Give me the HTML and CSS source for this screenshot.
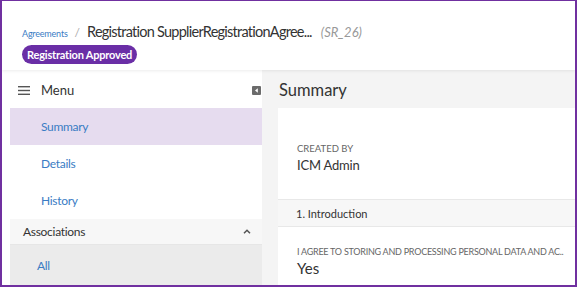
FILE: index.html
```html
<!DOCTYPE html>
<html lang="en">
<head>
    <meta charset="UTF-8">
    <title>Registration Agreement</title>
    <link rel="stylesheet" href="styles.css">
</head>
<body>
    <div class="frame">
        <header class="page-header">
            <div class="crumbs">
                <a class="crumb-link" href="#">Agreements</a>
                <span class="crumb-sep">/</span>
                <h1 class="title">Registration SupplierRegistrationAgree...</h1>
                <span class="code">(SR_26)</span>
            </div>
            <span class="badge">Registration Approved</span>
        </header>

        <div class="layout">
            <aside class="sidebar">
                <div class="menu-head">
                    <svg class="burger" width="12" height="9" viewBox="0 0 12 9">
                        <rect x="0" y="0" width="12" height="1.4" fill="#555"/>
                        <rect x="0" y="3.8" width="12" height="1.4" fill="#555"/>
                        <rect x="0" y="7.6" width="12" height="1.4" fill="#555"/>
                    </svg>
                    <span class="menu-label">Menu</span>
                    <svg class="collapse" width="9" height="9" viewBox="0 0 9 9">
                        <rect width="9" height="9" rx="1" fill="#6b6b6b"/>
                        <path d="M5.8 2.2 L3 4.5 L5.8 6.8 Z" fill="#fff"/>
                    </svg>
                </div>
                <a class="nav-item active" href="#">Summary</a>
                <a class="nav-item" href="#">Details</a>
                <a class="nav-item" href="#">History</a>
                <div class="group-head">
                    <span>Associations</span>
                    <svg width="8" height="5" viewBox="0 0 8 5">
                        <path d="M1 4.2 L4 1.2 L7 4.2" fill="none" stroke="#555" stroke-width="1.5"/>
                    </svg>
                </div>
                <a class="nav-item sub" href="#">All</a>
            </aside>

            <main class="main">
                <h2 class="main-title">Summary</h2>
                <div class="card">
                    <div class="field first">
                        <div class="field-label">CREATED BY</div>
                        <div class="field-value">ICM Admin</div>
                    </div>
                    <div class="section-head">1. Introduction</div>
                    <div class="field">
                        <div class="field-label narrow">I AGREE TO STORING AND PROCESSING PERSONAL DATA AND AC..</div>
                        <div class="field-value big">Yes</div>
                    </div>
                </div>
            </main>
        </div>
    </div>
</body>
</html>
```

FILE: styles.css
```css
* {
    margin: 0;
    padding: 0;
    box-sizing: border-box;
}

body {
    font-family: Lato, "Open Sans", sans-serif;
    color: #333;
    background: #fff;
}

a {
    text-decoration: none;
}

.frame {
    width: 577px;
    height: 287px;
    border: 2px solid #7030a0;
    border-top-width: 1px;
    overflow: hidden;
    display: flex;
    flex-direction: column;
    background: #fff;
}

.page-header {
    height: 69px;
    padding: 22px 0 0 20px;
    position: relative;
    z-index: 2;
    box-shadow: 0 1px 3px rgba(0, 0, 0, 0.08);
    background: #fff;
}

.crumbs {
    display: flex;
    align-items: baseline;
    white-space: nowrap;
    height: 20px;
}

.crumb-link {
    font-size: 9px;
    letter-spacing: -0.2px;
    color: #3a7cc4;
}

.crumb-sep {
    font-size: 12px;
    color: #aaa;
    margin: 0 7px 0 7px;
}

.title {
    font-size: 14.5px;
    font-weight: 400;
    letter-spacing: -0.75px;
    color: #333;
}

.code {
    font-size: 13px;
    font-style: italic;
    color: #999;
    margin-left: 9px;
}

.badge {
    display: inline-block;
    margin-top: 2px;
    height: 19px;
    line-height: 19px;
    padding: 0 5px;
    border-radius: 10px;
    background: #6a2ea6;
    color: #fff;
    font-size: 11px;
    font-weight: 700;
    letter-spacing: -0.2px;
}

.layout {
    flex: 1;
    display: flex;
    padding-left: 8px;
    min-height: 0;
}

.sidebar {
    width: 252px;
    display: flex;
    flex-direction: column;
    background: #fff;
}

.menu-head {
    height: 38px;
    display: flex;
    align-items: center;
    padding: 2px 1px 0 8px;
}

.menu-label {
    font-size: 13px;
    margin-left: 11px;
    flex: 1;
}

.nav-item {
    height: 37px;
    display: flex;
    align-items: center;
    padding-left: 31px;
    font-size: 12px;
    letter-spacing: -0.3px;
    color: #3a7cc4;
}

.nav-item.active {
    background: #e6dcef;
}

.group-head {
    height: 26px;
    display: flex;
    align-items: center;
    justify-content: space-between;
    padding: 0 11px 0 13px;
    font-size: 12px;
    letter-spacing: -0.3px;
    background: #f7f7f7;
    border-bottom: 1px solid #e6e6e6;
}

.nav-item.sub {
    height: 40px;
    padding-left: 27px;
    background: #ebebeb;
}

.main {
    flex: 1;
    background: #f4f4f4;
    padding-left: 16px;
    min-width: 0;
}

.main-title {
    height: 38px;
    display: flex;
    align-items: center;
    padding: 2px 0 0 1px;
    font-size: 16.5px;
    font-weight: 400;
}

.card {
    background: #fff;
}

.field {
    padding: 19px 0 0 19px;
    height: 58px;
}

.field.first {
    padding-top: 35px;
    height: 91px;
}

.field-label {
    font-size: 9.5px;
    color: #666;
    white-space: nowrap;
}

.field-label.narrow {
    font-size: 9px;
    letter-spacing: -0.25px;
}

.field-value {
    font-size: 13px;
    letter-spacing: -0.2px;
    margin-top: 3px;
}

.field-value.big {
    font-size: 15px;
    letter-spacing: 0;
    margin-top: 2px;
}

.section-head {
    height: 28px;
    display: flex;
    align-items: center;
    padding-left: 18px;
    font-size: 11px;
    background: #f7f7f7;
    border-top: 1px solid #e8e8e8;
    border-bottom: 1px solid #e8e8e8;
}
```
